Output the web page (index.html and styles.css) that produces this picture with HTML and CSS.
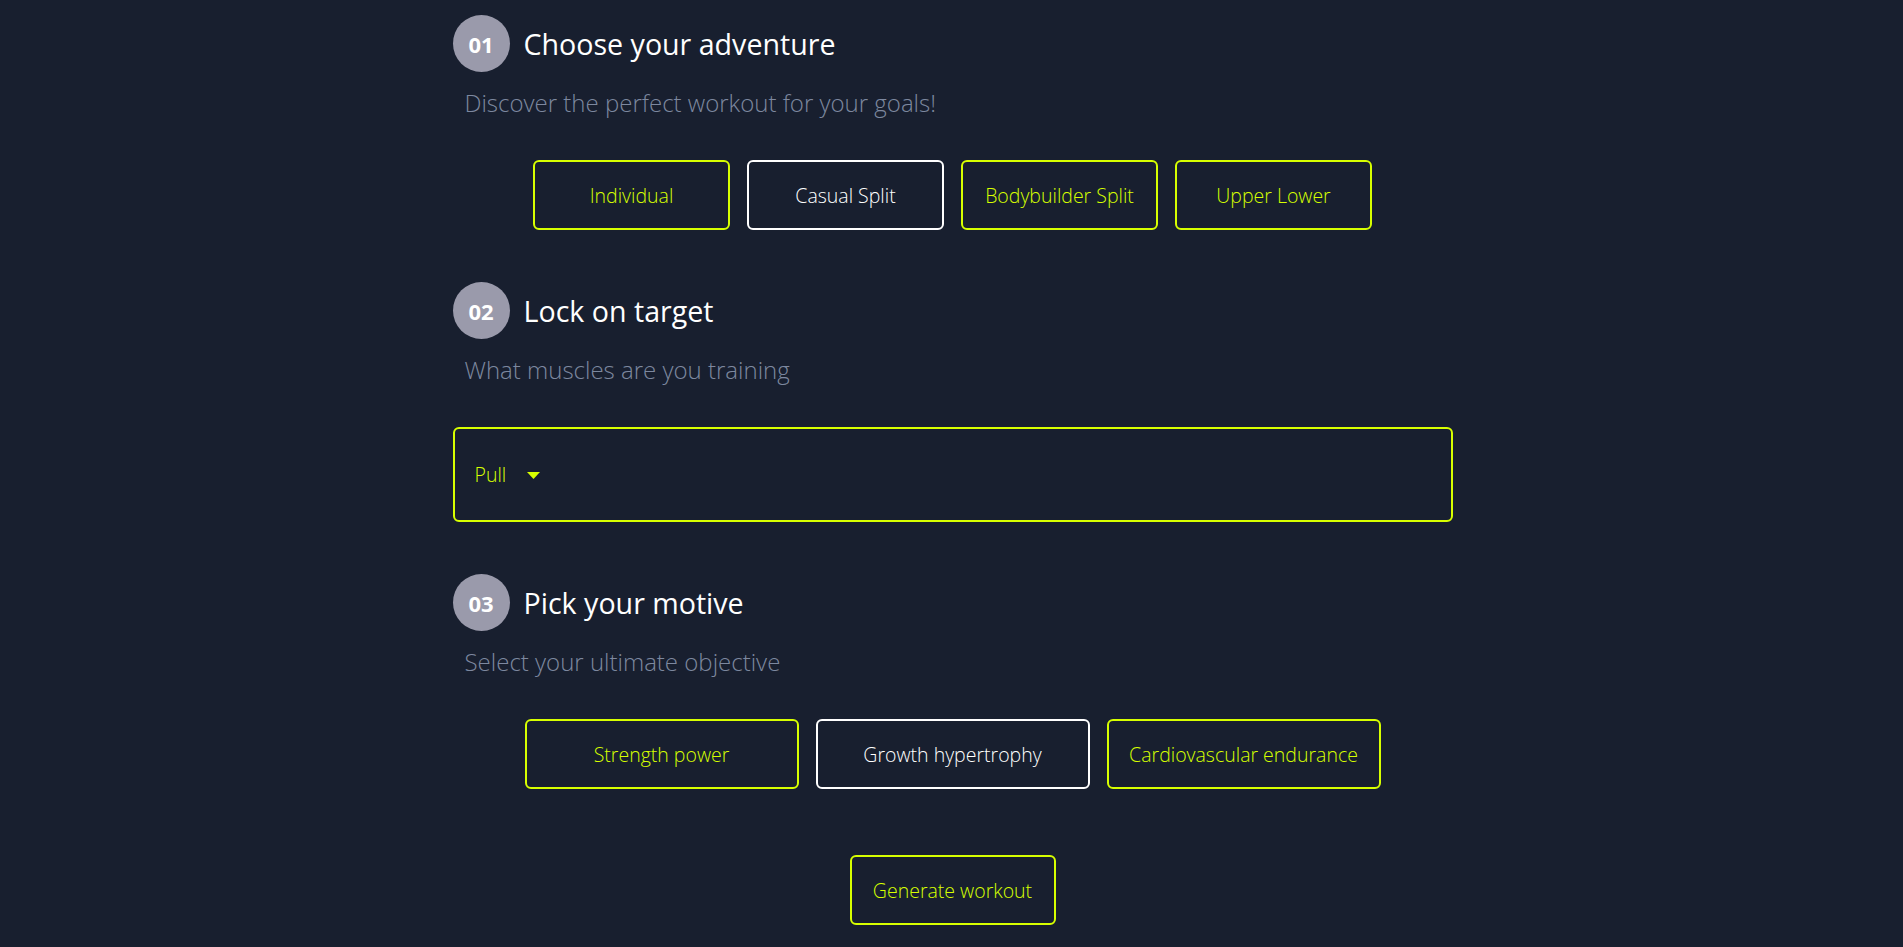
FILE: index.html
```html
<!DOCTYPE html>
<html lang="en">
<head>
<meta charset="utf-8">
<title>Workout generator</title>
<link rel="stylesheet" href="styles.css">
</head>
<body>
<main class="page">
  <section class="step">
    <div class="step-head">
      <span class="step-num">01</span>
      <h2 class="step-title">Choose your adventure</h2>
    </div>
    <p class="step-sub">Discover the perfect workout for your goals!</p>
    <div class="choices">
      <button class="choice choice-sm">Individual</button>
      <button class="choice choice-sm is-active">Casual Split</button>
      <button class="choice choice-sm">Bodybuilder Split</button>
      <button class="choice choice-sm">Upper Lower</button>
    </div>
  </section>

  <section class="step">
    <div class="step-head">
      <span class="step-num">02</span>
      <h2 class="step-title">Lock on target</h2>
    </div>
    <p class="step-sub">What muscles are you training</p>
    <div class="select">
      <span class="select-value">Pull</span>
      <svg class="caret" width="13" height="7" viewBox="0 0 13 7"><path d="M0 0H13L6.5 7Z" fill="#d7ff00"/></svg>
    </div>
  </section>

  <section class="step">
    <div class="step-head">
      <span class="step-num">03</span>
      <h2 class="step-title">Pick your motive</h2>
    </div>
    <p class="step-sub">Select your ultimate objective</p>
    <div class="choices">
      <button class="choice choice-lg">Strength power</button>
      <button class="choice choice-lg is-active">Growth hypertrophy</button>
      <button class="choice choice-lg">Cardiovascular endurance</button>
    </div>
  </section>

  <div class="generate-row">
    <button class="choice generate">Generate workout</button>
  </div>
</main>
</body>
</html>
```

FILE: styles.css
```css
* { box-sizing: border-box; }

html, body {
  margin: 0;
  padding: 0;
  background: #181f2f;
}

body {
  font-family: "Open Sans", "Noto Sans", sans-serif;
  color: #ffffff;
  height: 947px;
  overflow: hidden;
}

.page {
  width: 1000px;
  margin: 0 auto;
  padding-top: 15px;
  position: relative;
  left: 1px;
}

.step {
  display: flex;
  flex-direction: column;
  margin-bottom: 52px;
}

.step:nth-of-type(2) { margin-bottom: 52px; }
.step:nth-of-type(3) { margin-bottom: 66px; }

.step-head {
  display: flex;
  align-items: center;
  gap: 14px;
  height: 57px;
}

.step-num {
  width: 57px;
  height: 57px;
  border-radius: 50%;
  background: #9a9aab;
  color: #ffffff;
  font-weight: 700;
  font-size: 22px;
  display: flex;
  align-items: center;
  justify-content: center;
  flex: none;
}

.step-title {
  margin: 0;
  font-weight: 400;
  font-size: 28.6px;
  line-height: 34px;
  color: #ffffff;
}

.step-sub {
  margin: 17px 0 43px 12px;
  font-size: 24px;
  line-height: 28px;
  color: #7d889f;
  font-weight: 300;
}

.choices {
  display: flex;
  justify-content: center;
  gap: 17px;
}

.choice {
  font-family: inherit;
  background: transparent;
  border: 2px solid #d7ff00;
  border-radius: 6px;
  color: #d7ff00;
  font-size: 19.5px;
  font-weight: 300;
  height: 70px;
  padding: 0 12px;
  cursor: pointer;
}

.choice.is-active {
  border-color: #ffffff;
  color: #ffffff;
}

.choice-sm { width: 197px; }
.choice-lg { width: 274px; }

.select {
  height: 95px;
  border: 2px solid #d7ff00;
  border-radius: 6px;
  display: flex;
  align-items: center;
  gap: 21px;
  padding-left: 20px;
  color: #d7ff00;
  font-size: 19.5px;
  font-weight: 300;
}

.caret { display: block; margin-top: 2px; }

.generate-row {
  display: flex;
  justify-content: center;
}

.generate { width: 206px; }
```
